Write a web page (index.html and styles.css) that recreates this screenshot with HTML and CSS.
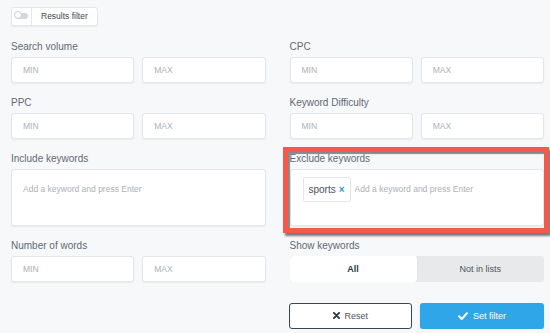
FILE: index.html
```
<!DOCTYPE html>
<html lang="en">
	<head>
		<meta charset="UTF-8" />
		<meta name="viewport" content="width=device-width, initial-scale=1.0" />
		<title>Keyword Filters</title>
		<link rel="stylesheet" href="styles.css">
	</head>
	<body>
		<button class="results-toggle" type="button">
			<span class="switch"><span class="knob"></span></span>
			<span class="toggle-label">Results filter</span>
		</button>

		<form class="filters">
			<div class="field">
				<label>Search volume</label>
				<div class="range">
					<input type="text" placeholder="MIN" />
					<input type="text" placeholder="MAX" />
				</div>
			</div>
			<div class="field">
				<label>CPC</label>
				<div class="range">
					<input type="text" placeholder="MIN" />
					<input type="text" placeholder="MAX" />
				</div>
			</div>
			<div class="field">
				<label>PPC</label>
				<div class="range">
					<input type="text" placeholder="MIN" />
					<input type="text" placeholder="MAX" />
				</div>
			</div>
			<div class="field">
				<label>Keyword Difficulty</label>
				<div class="range">
					<input type="text" placeholder="MIN" />
					<input type="text" placeholder="MAX" />
				</div>
			</div>
			<div class="field">
				<label>Include keywords</label>
				<div class="keywords">
					<input type="text" class="keyword-input" placeholder="Add a keyword and press Enter" />
				</div>
			</div>
			<div class="field exclude">
				<label>Exclude keywords</label>
				<div class="keywords">
					<span class="tag">sports <span class="tag-remove">&times;</span></span>
					<input type="text" class="keyword-input" placeholder="Add a keyword and press Enter" />
				</div>
				<div class="highlight"></div>
			</div>
			<div class="field">
				<label>Number of words</label>
				<div class="range">
					<input type="text" placeholder="MIN" />
					<input type="text" placeholder="MAX" />
				</div>
			</div>
			<div class="field">
				<label>Show keywords</label>
				<div class="segmented">
					<button type="button" class="segment active">All</button>
					<button type="button" class="segment">Not in lists</button>
				</div>
			</div>

			<div class="actions">
				<button type="reset" class="btn btn-reset">
					<svg width="7" height="7" viewBox="0 0 8 8"><path d="M1 1 L7 7 M7 1 L1 7" stroke="#2f3b46" stroke-width="2.2" stroke-linecap="round" /></svg>
					Reset
				</button>
				<button type="button" class="btn btn-primary">
					<svg width="10" height="8" viewBox="0 0 10 8"><path d="M1 4.2 L3.8 7 L9 1.2" fill="none" stroke="#fff" stroke-width="2" stroke-linecap="round" stroke-linejoin="round" /></svg>
					Set filter
				</button>
			</div>
		</form>
	</body>
</html>
```
FILE: styles.css
```
body {
	font-family: "Liberation Sans", Arial, sans-serif;
	background: #f6f8fa;
	margin: 0;
	padding: 5px 6px 0 11px;
	color: #5d6872;
}

.results-toggle {
	display: inline-flex;
	align-items: stretch;
	height: 19px;
	padding: 0;
	background: #fff;
	border: 1px solid #e3e6ea;
	border-radius: 3px;
	box-shadow: 0 1px 2px rgba(0, 0, 0, 0.06);
	font-family: inherit;
	cursor: pointer;
}

.switch {
	width: 19px;
	display: flex;
	align-items: center;
	justify-content: center;
	border-right: 1px solid #e6e8eb;
}

.switch .knob {
	position: relative;
	width: 13px;
	height: 6px;
	border-radius: 3px;
	background: #d4d8dc;
}

.switch .knob::before {
	content: "";
	position: absolute;
	left: -1px;
	top: -2px;
	width: 8px;
	height: 8px;
	border-radius: 50%;
	background: #fff;
	border: 1px solid #c9cdd1;
	box-sizing: border-box;
}

.toggle-label {
	display: flex;
	align-items: center;
	padding: 0 9px 0 9px;
	font-size: 8.5px;
	color: #3e464d;
}

.filters {
	display: grid;
	grid-template-columns: 1fr 1fr;
	column-gap: 24px;
	row-gap: 13px;
	margin-top: 14px;
}

.field {
	display: flex;
	flex-direction: column;
}

.field label {
	font-size: 10px;
	line-height: 14px;
	margin-bottom: 3px;
	color: #5f6a74;
}

.range {
	display: grid;
	grid-template-columns: 1fr 1fr;
	gap: 8px;
}

.range input {
	box-sizing: border-box;
	width: 100%;
	height: 26px;
	padding: 0 11px;
	background: #fff;
	border: 1px solid #e3e6ea;
	border-radius: 3px;
	box-shadow: 0 1px 2px rgba(0, 0, 0, 0.06);
	font-family: inherit;
	font-size: 8.5px;
	outline: none;
}

input::placeholder {
	color: #aab1b8;
}

.keywords {
	box-sizing: border-box;
	height: 57px;
	display: flex;
	align-items: flex-start;
	gap: 4px;
	padding: 7px 11px;
	background: #fff;
	border: 1px solid #e3e6ea;
	border-radius: 3px;
	box-shadow: 0 1px 2px rgba(0, 0, 0, 0.06);
}

.keyword-input {
	flex: 1;
	min-width: 0;
	height: 25px;
	padding: 0;
	border: none;
	outline: none;
	background: transparent;
	font-family: inherit;
	font-size: 8.5px;
}

.tag {
	display: inline-flex;
	align-items: center;
	gap: 3px;
	height: 25px;
	padding: 0 5px;
	margin-left: 1px;
	border: 1px solid #e3e6ea;
	border-radius: 2px;
	box-sizing: border-box;
	font-size: 10px;
	color: #4a5259;
}

.tag-remove {
	color: #2c9be0;
	font-weight: bold;
	font-size: 10px;
}

.exclude {
	position: relative;
}

.highlight {
	position: absolute;
	top: -5px;
	left: -7px;
	right: -5px;
	bottom: -7px;
	border: 5px solid #f4594a;
	box-shadow: 2px 3px 2px rgba(40, 40, 40, 0.6), inset 2px 2px 1px rgba(60, 60, 60, 0.6);
	pointer-events: none;
}

.segmented {
	display: grid;
	grid-template-columns: 1fr 1fr;
	height: 26px;
	border-radius: 3px;
	background: #e8e9ea;
	overflow: hidden;
}

.segment {
	border: none;
	background: transparent;
	font-family: inherit;
	font-size: 9px;
	color: #4b545c;
	cursor: pointer;
}

.segment.active {
	background: #fff;
	font-weight: bold;
	color: #2f3940;
	box-shadow: 0 1px 2px rgba(0, 0, 0, 0.08);
	border-radius: 3px;
}

.actions {
	grid-column: 2;
	display: grid;
	grid-template-columns: 1fr 1fr;
	gap: 8px;
	margin-top: 8px;
	margin-left: -1px;
}

.btn {
	display: flex;
	align-items: center;
	justify-content: center;
	gap: 5px;
	height: 26px;
	border-radius: 3px;
	font-family: inherit;
	font-size: 9px;
	cursor: pointer;
}

.btn-reset {
	background: #fff;
	border: 1.5px solid #3a4651;
	color: #4a545d;
}

.btn-primary {
	background: #2ea6e8;
	border: none;
	color: #fff;
	box-shadow: 0 1px 2px rgba(0, 0, 0, 0.12);
}
```
